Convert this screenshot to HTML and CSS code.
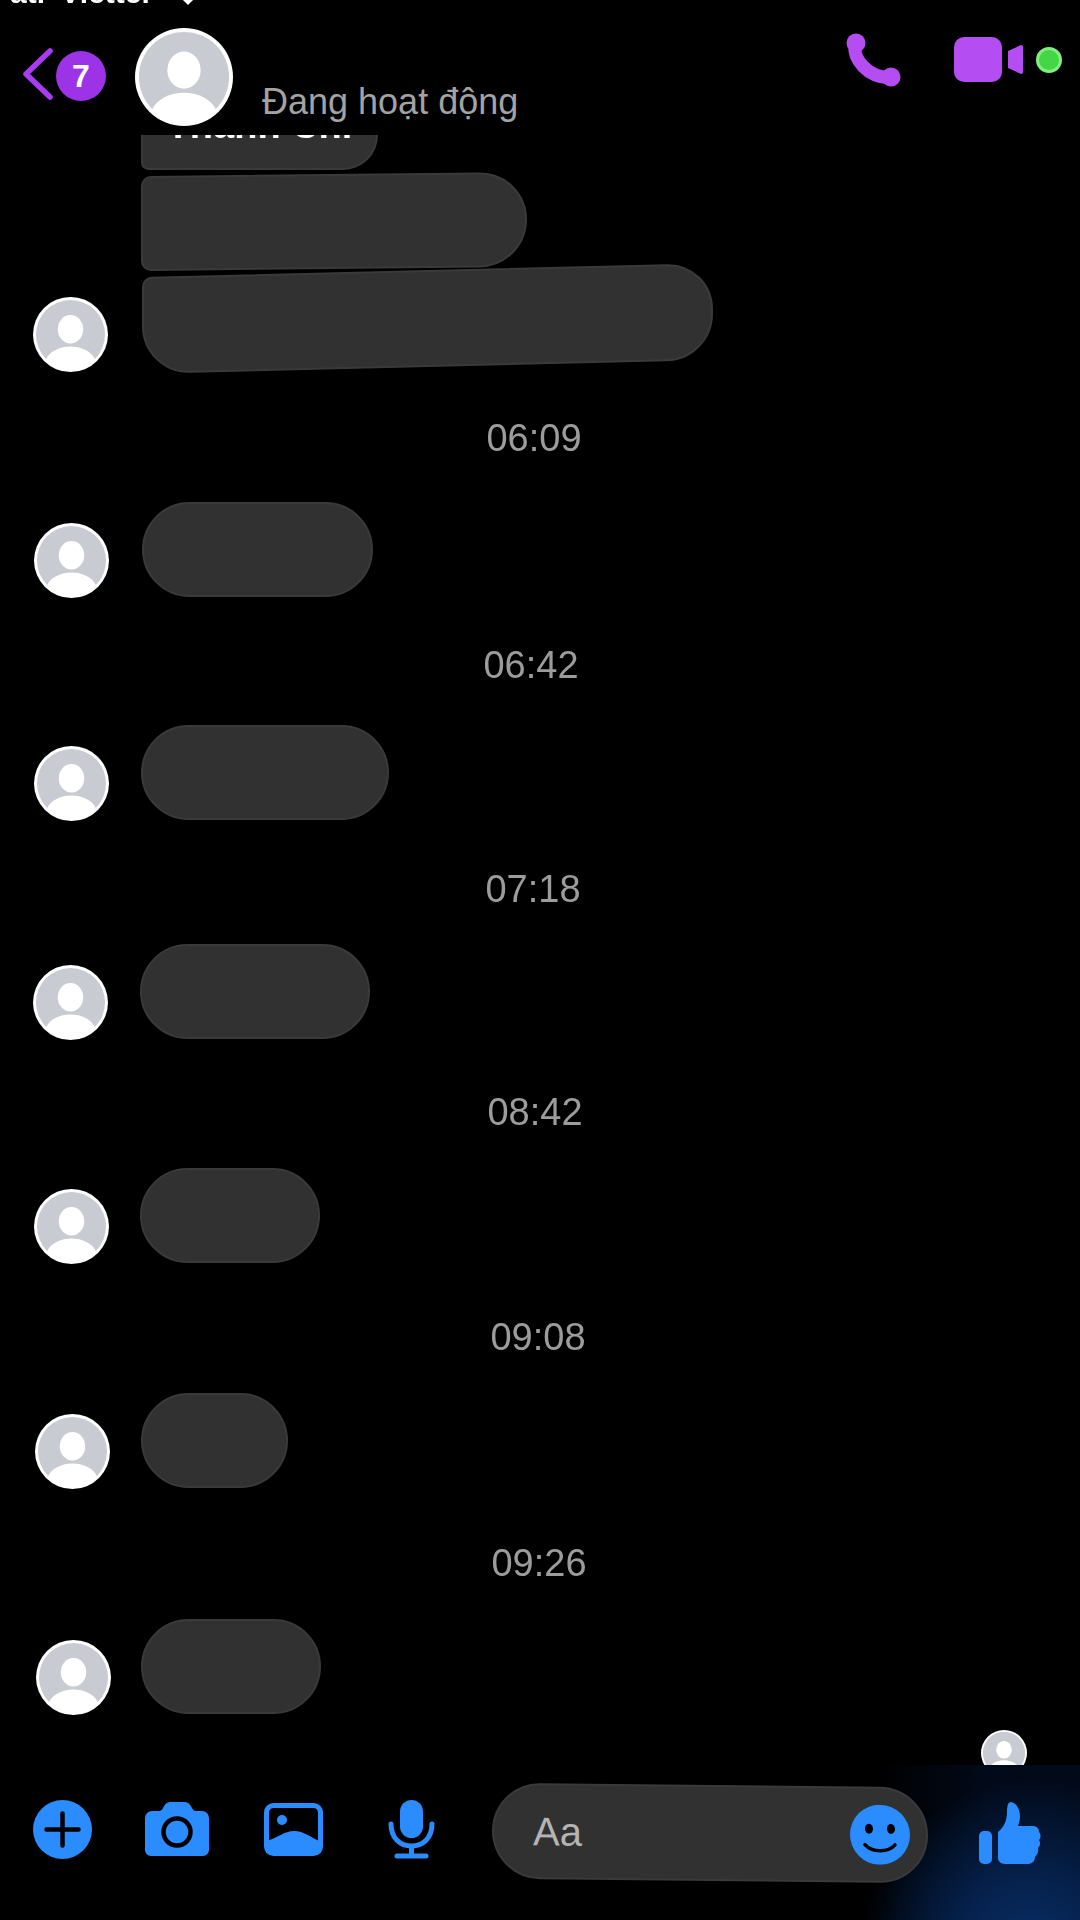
FILE: index.html
```html
<!DOCTYPE html>
<html>
<head>
    <title>Messenger</title>
    <link rel="stylesheet" href="styles.css">
</head>
<body>
    <svg class="defs" width="0" height="0">
        <symbol id="avatar" viewBox="0 0 100 100">
            <circle cx="50" cy="50" r="50" fill="#ffffff"/>
            <circle cx="50" cy="50" r="46" fill="#c9cbd2"/>
            <ellipse cx="50" cy="43" rx="17" ry="19" fill="#ffffff"/>
            <path d="M17 84C22 72 36 66 50 66C64 66 78 72 83 84A46 46 0 0 1 17 84Z" fill="#ffffff"/>
        </symbol>
    </svg>

    <div class="phone">
        <div class="header">
            <div class="status-bar">
                <span class="carrier">atl Viettel</span>
                <span class="wifi-tip"></span>
            </div>
            <div class="header-row">
                <svg class="back" viewBox="0 0 31 52">
                    <path d="M28 3L4 26L28 49" fill="none" stroke="#a93cf2" stroke-width="5.5" stroke-linecap="round" stroke-linejoin="round"/>
                </svg>
                <span class="badge">7</span>
                <svg class="avatar-big"><use href="#avatar"/></svg>
                <span class="active-text">Đang hoạt động</span>
                <svg class="phone-icon" viewBox="0 0 56 55">
                    <path d="M10 12C8 26 22 44 45 45" fill="none" stroke="#b44df2" stroke-width="13" stroke-linecap="round"/>
                    <circle cx="11" cy="10" r="9.5" fill="#b44df2"/>
                    <circle cx="46" cy="44" r="9.5" fill="#b44df2"/>
                </svg>
                <svg class="video-icon" viewBox="0 0 69 45">
                    <rect width="48" height="45" rx="10" fill="#b44df2"/>
                    <path d="M54 14L67 8Q69 8 69 10V35Q69 37 67 37L54 31Z" fill="#b44df2"/>
                </svg>
                <span class="online-dot"></span>
            </div>
        </div>

        <div class="chat">
            <div class="bubble bubble-top"><span class="clipped-name">Thanh Chi</span></div>
            <div class="bubble bubble-mid"></div>
            <div class="row row-first">
                <svg class="avatar"><use href="#avatar"/></svg>
                <div class="bubble bubble-last"></div>
            </div>

            <div class="time time-1">06:09</div>
            <div class="row row-1">
                <svg class="avatar"><use href="#avatar"/></svg>
                <div class="bubble pill pill-1"></div>
            </div>

            <div class="time time-2">06:42</div>
            <div class="row row-2">
                <svg class="avatar"><use href="#avatar"/></svg>
                <div class="bubble pill pill-2"></div>
            </div>

            <div class="time time-3">07:18</div>
            <div class="row row-3">
                <svg class="avatar"><use href="#avatar"/></svg>
                <div class="bubble pill pill-3"></div>
            </div>

            <div class="time time-4">08:42</div>
            <div class="row row-4">
                <svg class="avatar"><use href="#avatar"/></svg>
                <div class="bubble pill pill-4"></div>
            </div>

            <div class="time time-5">09:08</div>
            <div class="row row-5">
                <svg class="avatar"><use href="#avatar"/></svg>
                <div class="bubble pill pill-5"></div>
            </div>

            <div class="time time-6">09:26</div>
            <div class="row row-6">
                <svg class="avatar"><use href="#avatar"/></svg>
                <div class="bubble pill pill-6"></div>
            </div>

            <svg class="seen"><use href="#avatar"/></svg>
        </div>

        <div class="footer">
            <svg class="tool tool-plus" viewBox="0 0 59 59">
                <circle cx="29.5" cy="29.5" r="29.5" fill="#2b8cff"/>
                <path d="M13.5 29.5H45.5M29.5 13.5V45.5" stroke="#000000" stroke-width="4.5" stroke-linecap="round"/>
            </svg>
            <svg class="tool tool-camera" viewBox="0 0 64 54">
                <path d="M7 9H14C16 9 17 8 18 6C20 2 22 0 26 0H39C43 0 45 2 47 6C48 8 49 9 51 9H57A7 7 0 0 1 64 16V48A6 6 0 0 1 58 54H6A6 6 0 0 1 0 48V16A7 7 0 0 1 7 9Z" fill="#2b8cff"/>
                <circle cx="32" cy="30" r="13.5" fill="none" stroke="#000000" stroke-width="4.5"/>
            </svg>
            <svg class="tool tool-image" viewBox="0 0 59 53">
                <rect x="2.5" y="2.5" width="54" height="48" rx="7" fill="#000000" stroke="#2b8cff" stroke-width="5"/>
                <circle cx="18" cy="17" r="5" fill="#2b8cff"/>
                <path d="M2 38C14 35 20 28 30 28C40 28 46 34 57 39V50H2Z" fill="#2b8cff"/>
            </svg>
            <svg class="tool tool-mic" viewBox="0 0 47 59">
                <rect x="12" y="0" width="23" height="38" rx="11.5" fill="#2b8cff"/>
                <path d="M3 24C3 38 12 46 23.5 46C35 46 44 38 44 24M23.5 46V56M9 56H38" fill="none" stroke="#2b8cff" stroke-width="5" stroke-linecap="round"/>
            </svg>
            <div class="input">
                <span class="input-text">Aa</span>
                <svg class="emoji" viewBox="0 0 60 60">
                    <circle cx="30" cy="30" r="30" fill="#2b8cff"/>
                    <ellipse cx="19" cy="24" rx="4" ry="5" fill="#000000"/>
                    <ellipse cx="41" cy="24" rx="4" ry="5" fill="#000000"/>
                    <path d="M15 40C22 48 38 48 45 40" fill="none" stroke="#000000" stroke-width="3.5" stroke-linecap="round"/>
                </svg>
            </div>
            <svg class="like" viewBox="0 0 62 63">
                <rect x="0" y="29" width="13" height="33" rx="5" fill="#2b8cff"/>
                <path d="M19 30C24 26 28 20 28 10C28 4 29 0 32 0C38 1 41 8 41 14C41 18 40 21 39 24H54C58 24 60 27 60 30C62 32 62 36 60 38C62 41 61 44 59 46C60 50 58 53 56 55C56 59 53 62 49 62H26C22 62 19 59 19 56Z" fill="#2b8cff"/>
            </svg>
        </div>
    </div>
</body>
</html>
```

FILE: styles.css
```css
* {
    margin: 0;
    padding: 0;
    box-sizing: border-box;
    font-family: "Liberation Sans", Arial, sans-serif;
}

body {
    background-color: #000000;
}

.defs {
    display: block;
    height: 0;
}

.phone {
    width: 1080px;
    height: 1920px;
    display: flex;
    flex-direction: column;
    overflow: hidden;
    filter: blur(0.7px);
}

/* header */
.header {
    height: 135px;
    background-color: #000000;
}

.status-bar {
    height: 5px;
    overflow: hidden;
    position: relative;
    color: #ffffff;
    padding-left: 10px;
}

.carrier {
    display: block;
    font-size: 30px;
    font-weight: bold;
    line-height: 30px;
    margin-top: -22px;
    word-spacing: 7px;
    white-space: nowrap;
}

.wifi-tip {
    position: absolute;
    left: 183px;
    top: -7px;
    width: 10px;
    height: 10px;
    background-color: #ffffff;
    transform: rotate(45deg);
}

.header-row {
    display: flex;
    align-items: flex-start;
    height: 130px;
    padding-left: 22px;
}

.back {
    width: 31px;
    height: 52px;
    margin-top: 43px;
}

.badge {
    width: 50px;
    height: 50px;
    margin-left: 3px;
    margin-top: 46px;
    border-radius: 50%;
    background-color: #9d33e6;
    color: #ffffff;
    font-size: 32px;
    font-weight: bold;
    line-height: 50px;
    text-align: center;
}

.avatar-big {
    width: 98px;
    height: 98px;
    margin-left: 29px;
    margin-top: 23px;
}

.active-text {
    margin-left: 29px;
    margin-top: 77px;
    color: #a3a3a3;
    font-size: 36px;
    line-height: 40px;
    white-space: nowrap;
    width: 583px;
}

.phone-icon {
    width: 56px;
    height: 55px;
    margin-top: 28px;
}

.video-icon {
    width: 69px;
    height: 45px;
    margin-left: 53px;
    margin-top: 32px;
}

.online-dot {
    width: 26px;
    height: 26px;
    margin-left: 13px;
    margin-top: 42px;
    border-radius: 50%;
    background-color: #45d648;
    border: 3px solid #7ff07f;
}

/* chat */
.chat {
    flex: 1;
    overflow: hidden;
}

.bubble {
    background-color: #313131;
    border: 2px solid #3a3a3a;
}

.bubble-top {
    width: 237px;
    height: 35px;
    margin-left: 141px;
    border-top: none;
    border-radius: 0 0 48px 10px;
    overflow: hidden;
    text-align: center;
    color: #ffffff;
}

.clipped-name {
    display: block;
    font-size: 38px;
    font-weight: bold;
    line-height: 38px;
    margin-top: -29px;
    white-space: nowrap;
}

.bubble-mid {
    width: 386px;
    height: 95px;
    margin-left: 141px;
    margin-top: 4px;
    border-radius: 10px 48px 48px 10px;
    transform: skewY(-0.6deg);
}

.row {
    display: flex;
    align-items: flex-end;
    height: 96px;
}

.avatar {
    width: 75px;
    height: 75px;
    flex-shrink: 0;
}

.row-first {
    height: 101px;
    margin-top: 2px;
    padding-left: 33px;
    gap: 34px;
}

.bubble-last {
    width: 571px;
    height: 97px;
    margin-bottom: 5px;
    border-radius: 10px 46px 46px 48px;
    transform: skewY(-1.4deg);
}

.pill {
    height: 95px;
    border-radius: 48px;
    align-self: flex-start;
}

.time {
    height: 44px;
    line-height: 44px;
    font-size: 38px;
    color: #9c9c9c;
    text-align: center;
}

/* rows and times drift a little down the page, the reference is a warped photo */
.time-1 { margin-top: 44px; padding-right: 12px; }
.time-2 { margin-top: 45px; padding-right: 18px; }
.time-3 { margin-top: 46px; padding-right: 14px; }
.time-4 { margin-top: 50px; padding-right: 10px; }
.time-5 { margin-top: 51px; padding-right: 4px; }
.time-6 { margin-top: 52px; padding-right: 2px; }

.row-1 { margin-top: 42px; padding-left: 34px; gap: 33px; }
.row-2 { margin-top: 38px; padding-left: 34px; gap: 32px; }
.row-3 { margin-top: 33px; padding-left: 33px; gap: 32px; }
.row-4 { margin-top: 34px; padding-left: 34px; gap: 31px; }
.row-5 { margin-top: 34px; padding-left: 35px; gap: 31px; }
.row-6 { margin-top: 34px; padding-left: 36px; gap: 30px; }

.pill-1 { width: 231px; }
.pill-2 { width: 248px; }
.pill-3 { width: 230px; }
.pill-4 { width: 180px; }
.pill-5 { width: 147px; }
.pill-6 { width: 180px; }

.seen {
    display: block;
    width: 46px;
    height: 46px;
    margin-left: 981px;
    margin-top: 15px;
}

/* footer */
.footer {
    height: 155px;
    display: flex;
    align-items: center;
    padding: 18px 0 37px 33px;
    background:
        radial-gradient(ellipse 170px 170px at 1030px 185px, #0a2f68 0%, #05204a 45%, rgba(3, 12, 30, 0) 100%),
        linear-gradient(to right, #000000 880px, #020a1a 990px);
}

.tool {
    margin-bottom: 8px;
    flex-shrink: 0;
}

.tool-plus { width: 59px; height: 59px; }
.tool-camera { width: 64px; height: 54px; margin-left: 53px; }
.tool-image { width: 59px; height: 53px; margin-left: 55px; }
.tool-mic { width: 47px; height: 59px; margin-left: 65px; }

.input {
    width: 436px;
    height: 96px;
    margin-left: 57px;
    display: flex;
    align-items: center;
    justify-content: space-between;
    padding: 0 16px 0 39px;
    background-color: #313131;
    border: 2px solid #3a3a3a;
    border-radius: 48px;
    flex-shrink: 0;
    transform: skewY(0.6deg);
}

.input-text {
    font-size: 40px;
    color: #b4b4b4;
}

.emoji {
    width: 60px;
    height: 60px;
}

.like {
    width: 62px;
    height: 63px;
    margin-left: 51px;
    flex-shrink: 0;
}
```
